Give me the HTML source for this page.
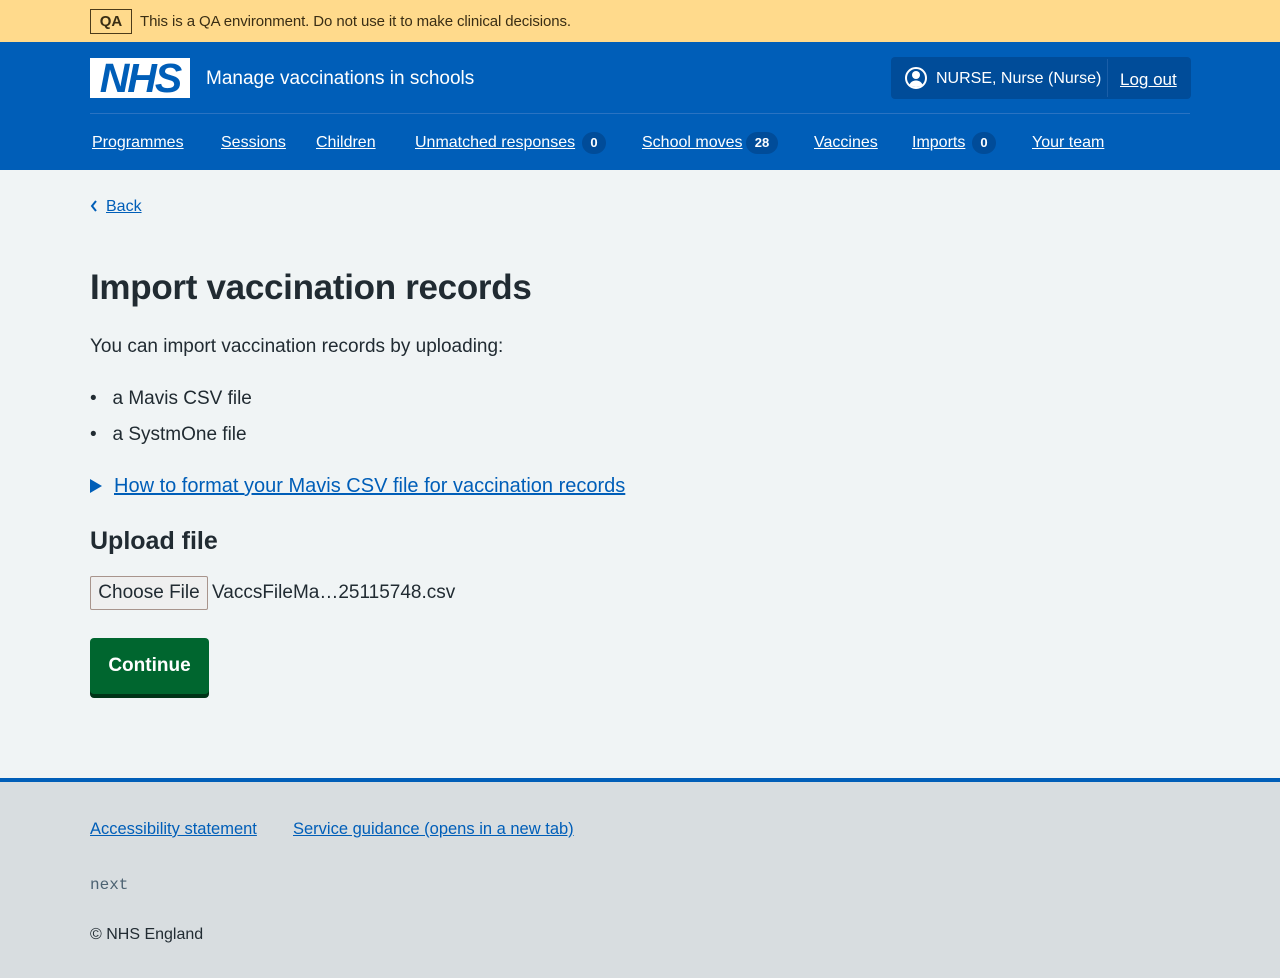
<!DOCTYPE html>
<html><head><meta charset="utf-8"><style>
*{box-sizing:border-box;margin:0;padding:0}
body{width:1280px;height:978px;font-family:"Liberation Sans",sans-serif;background:#f0f4f5;color:#212b32;position:relative;overflow:hidden}
a{color:#005eb8}
.qa{position:absolute;top:0;left:0;width:1280px;height:42px;background:#ffda8c}
.qa .tag{position:absolute;left:90px;top:9px;width:42px;height:25px;border:1px solid #4c3b1a;font-weight:bold;font-size:15px;text-align:center;line-height:23px;color:#3a2e14}
.qa .t{position:absolute;left:140px;top:13px;font-size:15px;color:#3a2e14;letter-spacing:-0.1px}
.hd{position:absolute;top:42px;left:0;width:1280px;height:128px;background:#005eb8;color:#fff}
.logo{position:absolute;left:90px;top:16px;width:100px;height:40px;background:#fff;color:#005eb8;font-weight:bold;font-style:italic;font-size:41px;line-height:40px;text-align:center;letter-spacing:-2px}
.svc{position:absolute;left:206px;top:26px;font-size:19px}
.acct{position:absolute;left:891px;top:15px;width:300px;height:42px;background:#004c99;border-radius:4px}
.acct .n{position:absolute;left:45px;top:13px;font-size:16px}
.acct .sep{position:absolute;left:216px;top:2px;width:1px;height:38px;background:#1a5ea8}
.acct a{position:absolute;left:229px;top:13px;font-size:17px;color:#fff}
.line{position:absolute;left:90px;top:71px;width:1100px;height:1px;background:#2a73c2}
.nav{position:absolute;top:92px;font-size:16px;color:#fff}
.nav a{color:#fff;position:absolute;white-space:nowrap}
.badge{position:absolute;height:22px;border-radius:11px;background:#004c99;color:#fff;font-size:13px;font-weight:bold;text-align:center;line-height:22px;top:-2px}
h1{position:absolute;left:90px;top:268px;font-size:35px;font-weight:bold;letter-spacing:-0.3px}
.p{position:absolute;left:90px;font-size:19px}
h2{position:absolute;left:90px;top:527px;font-size:25px;font-weight:bold}
.btnf{position:absolute;left:90px;top:576px;width:118px;height:34px;border:1px solid #a8948c;background:#efefef;border-radius:2px;font-size:19px;text-align:center;line-height:32px}
.cont{position:absolute;left:90px;top:638px;width:119px;background:#00662f;border-radius:4px;box-shadow:0 4px 0 #003317;color:#fff;font-weight:bold;font-size:19px;text-align:center;line-height:56px;height:56px}
.ft{position:absolute;top:778px;left:0;width:1280px;height:200px;background:#d8dde0;border-top:4px solid #005eb8}
</style></head><body>
<div class="qa"><div class="tag">QA</div><div class="t">This is a QA environment. Do not use it to make clinical decisions.</div></div>
<div class="hd">
<div class="logo">NHS</div>
<div class="svc">Manage vaccinations in schools</div>
<div class="acct">
<svg style="position:absolute;left:13px;top:9px" width="24" height="24" viewBox="0 0 24 24"><circle cx="12" cy="12" r="10" fill="none" stroke="#fff" stroke-width="2"/><circle cx="12" cy="9" r="4" fill="#fff"/><path d="M5.5 18.5c1.5-3 4-4 6.5-4s5 1 6.5 4c-1.7 1.8-4 2.5-6.5 2.5s-4.8-.7-6.5-2.5z" fill="#fff"/></svg>
<div class="n">NURSE, Nurse (Nurse)</div><div class="sep"></div><a href="#">Log out</a></div>
<div class="line"></div>
<div class="nav" style="left:0;width:1280px">
<a href="#" style="left:92px">Programmes</a>
<a href="#" style="left:221px">Sessions</a>
<a href="#" style="left:316px">Children</a>
<a href="#" style="left:415px">Unmatched responses</a><span class="badge" style="left:582px;width:24px">0</span>
<a href="#" style="left:642px">School moves</a><span class="badge" style="left:746px;width:32px">28</span>
<a href="#" style="left:814px">Vaccines</a>
<a href="#" style="left:912px">Imports</a><span class="badge" style="left:972px;width:24px">0</span>
<a href="#" style="left:1032px">Your team</a>
</div>
</div>
<svg style="position:absolute;left:89px;top:199px" width="10" height="14" viewBox="0 0 10 14"><path d="M7 2L3 7l4 5" fill="none" stroke="#005eb8" stroke-width="2"/></svg>
<a href="#" style="position:absolute;left:106px;top:198px;font-size:16px">Back</a>
<h1>Import vaccination records</h1>
<div class="p" style="top:336px">You can import vaccination records by uploading:</div>
<div class="p" style="top:388px">•&nbsp;&nbsp;&nbsp;a Mavis CSV file</div>
<div class="p" style="top:424px">•&nbsp;&nbsp;&nbsp;a SystmOne file</div>
<svg style="position:absolute;left:90px;top:479px" width="12" height="14"><path d="M0 0L12 7L0 14z" fill="#005eb8"/></svg>
<a href="#" class="p" style="left:114px;top:475px;font-size:20px">How to format your Mavis CSV file for vaccination records</a>
<h2>Upload file</h2>
<div class="btnf">Choose File</div>
<div class="p" style="left:212px;top:582px">VaccsFileMa…25115748.csv</div>
<div class="cont">Continue</div>
<div class="ft">
<a href="#" style="position:absolute;left:90px;top:38px;font-size:16.5px">Accessibility statement</a>
<a href="#" style="position:absolute;left:293px;top:38px;font-size:16.5px">Service guidance (opens in a new tab)</a>
<div style="position:absolute;left:90px;top:94px;font-family:'Liberation Mono',monospace;font-size:16px;color:#4c6272">next</div>
<div style="position:absolute;left:90px;top:144px;font-size:16px">© NHS England</div>
</div>
</body></html>
